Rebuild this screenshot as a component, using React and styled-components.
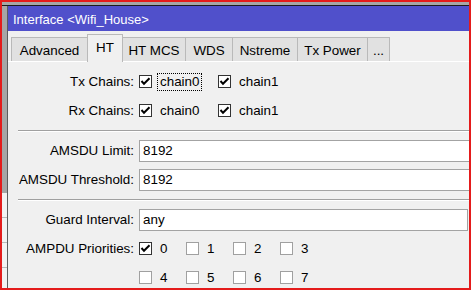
import styled, { createGlobalStyle } from 'styled-components';

const GlobalStyle = createGlobalStyle`
    body {
        margin: 0;
        font-family: "Liberation Sans", Arial, sans-serif;
        font-size: 13.4px;
        color: #000;
    }
`;

const Frame = styled.div`
    width: 471px;
    height: 290px;
    box-sizing: border-box;
    border: 2px solid #e41b1b;
    overflow: hidden;
    display: flex;
    flex-direction: column;
    background: #a6a6a6;
`;

const TopStrip = styled.div`
    height: 3px;
    flex-shrink: 0;
    border-bottom: 1px solid #1c1c1c;
`;

const Body = styled.div`
    flex: 1;
    display: flex;
    min-height: 0;
`;

const Behind = styled.div`
    width: 5px;
    flex-shrink: 0;
    display: flex;
    flex-direction: column;
    background: #f2f2f2;
`;

const BehindDark = styled.div`
    height: 187px;
    background: #a6a6a6;
`;

const BehindRow = styled.div`
    height: 24px;
    border-bottom: 1px solid #b8b8b8;
`;

const Window = styled.div`
    flex: 1;
    display: flex;
    flex-direction: column;
    background: #f0f0f0;
    border-left: 1px solid #5c5c5c;
    overflow: hidden;
    min-width: 0;
`;

const TitleBar = styled.div`
    height: 25px;
    flex-shrink: 0;
    background: #5050cb;
    color: #fff;
    font-size: 13px;
    display: flex;
    align-items: center;
    padding: 2px 0 0 5px;
    box-sizing: border-box;
    white-space: nowrap;
`;

const TabBar = styled.div`
    height: 31px;
    flex-shrink: 0;
    display: flex;
    align-items: flex-end;
    padding-left: 3px;
    border-bottom: 1px solid #ffffff;
    box-sizing: border-box;
`;

const Tab = styled.div`
    width: ${p => p.$w}px;
    height: ${p => (p.$active ? 28 : 24)}px;
    margin-left: -1px;
    margin-bottom: ${p => (p.$active ? -1 : 0)}px;
    box-sizing: border-box;
    border: 1px solid #b9b9b9;
    border-bottom: none;
    background: ${p => (p.$active ? '#f0f0f0' : '#e1e1e1')};
    display: flex;
    justify-content: center;
    align-items: ${p => (p.$active ? 'flex-start' : 'center')};
    padding-top: ${p => (p.$active ? 5 : 1)}px;
    white-space: nowrap;
    position: relative;
    z-index: ${p => (p.$active ? 1 : 0)};

    &:first-child {
        margin-left: 0;
    }
`;

const Content = styled.div`
    padding-top: 5px;
    display: flex;
    flex-direction: column;
`;

const Row = styled.div`
    height: 29px;
    display: flex;
    align-items: center;
    white-space: nowrap;
`;

const Label = styled.div`
    width: 131px;
    flex-shrink: 0;
    box-sizing: border-box;
    padding-right: 5px;
    text-align: right;
`;

const Separator = styled.div`
    margin: 5px 0 4px 10px;
    border-top: 1px solid #a0a0a0;
    border-bottom: 1px solid #ffffff;
`;

const Field = styled.div`
    width: ${p => p.$w}px;
    height: 22px;
    flex-shrink: 0;
    box-sizing: border-box;
    border: 1px solid #a3a3a3;
    background: #fff;
    padding-left: 3px;
    display: flex;
    align-items: center;
`;

const CheckItem = styled.div`
    width: ${p => p.$w}px;
    flex-shrink: 0;
    display: flex;
    align-items: center;
`;

const Box = styled.div`
    width: 13px;
    height: 13px;
    flex-shrink: 0;
    box-sizing: border-box;
    border: 1px solid ${p => (p.$on ? '#333' : '#a0a0a0')};
    background: #fff;
    display: flex;
    align-items: center;
    justify-content: center;
`;

const CheckText = styled.span`
    margin-left: 5px;
    padding: 0 3px;
    height: 18px;
    line-height: 18px;
    outline: ${p => (p.$focus ? '1px dotted #000' : 'none')};
    outline-offset: -1px;
`;

const Checkbox = ({ on, text, w, focus }) => (
    <CheckItem $w={w}>
        <Box $on={on}>
            {on && (
                <svg width="11" height="11" viewBox="0 0 11 11">
                    <polyline points="1.5,5 4,7.8 9.5,2.2" fill="none" stroke="#000" strokeWidth="2" />
                </svg>
            )}
        </Box>
        <CheckText $focus={focus}>{text}</CheckText>
    </CheckItem>
);

const tabs = [
    { name: 'Advanced', w: 77 },
    { name: 'HT', w: 36, active: true },
    { name: 'HT MCS', w: 64 },
    { name: 'WDS', w: 48 },
    { name: 'Nstreme', w: 66 },
    { name: 'Tx Power', w: 71 },
    { name: '...', w: 23 },
];

const App = () => {
    return (
        <>
            <GlobalStyle />
            <Frame>
                <TopStrip />
                <Body>
                    <Behind>
                        <BehindDark />
                        <BehindRow />
                        <BehindRow />
                        <BehindRow />
                    </Behind>
                    <Window>
                        <TitleBar>Interface &lt;Wifi_House&gt;</TitleBar>
                        <TabBar>
                            {tabs.map(t => (
                                <Tab key={t.name} $w={t.w} $active={t.active}>{t.name}</Tab>
                            ))}
                        </TabBar>
                        <Content>
                            <Row>
                                <Label>Tx Chains:</Label>
                                <Checkbox on text="chain0" w={79} focus />
                                <Checkbox on text="chain1" w={79} />
                            </Row>
                            <Row>
                                <Label>Rx Chains:</Label>
                                <Checkbox on text="chain0" w={79} />
                                <Checkbox on text="chain1" w={79} />
                            </Row>
                            <Separator />
                            <Row>
                                <Label>AMSDU Limit:</Label>
                                <Field $w={345}>8192</Field>
                            </Row>
                            <Row>
                                <Label>AMSDU Threshold:</Label>
                                <Field $w={345}>8192</Field>
                            </Row>
                            <Separator />
                            <Row>
                                <Label>Guard Interval:</Label>
                                <Field $w={329}>any</Field>
                            </Row>
                            <Row>
                                <Label>AMPDU Priorities:</Label>
                                <Checkbox on text="0" w={47} />
                                <Checkbox text="1" w={47} />
                                <Checkbox text="2" w={47} />
                                <Checkbox text="3" w={47} />
                            </Row>
                            <Row>
                                <Label />
                                <Checkbox text="4" w={47} />
                                <Checkbox text="5" w={47} />
                                <Checkbox text="6" w={47} />
                                <Checkbox text="7" w={47} />
                            </Row>
                        </Content>
                    </Window>
                </Body>
            </Frame>
        </>
    );
};

export default App;
